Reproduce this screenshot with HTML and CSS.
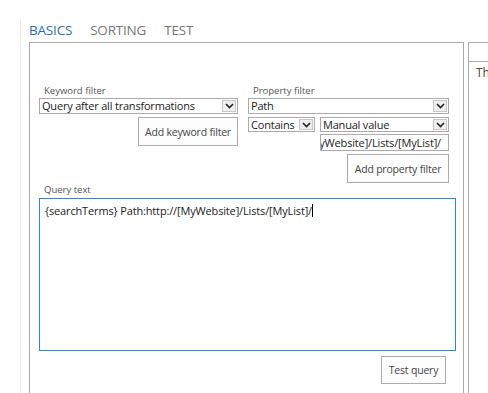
FILE: index.html
```html
<!DOCTYPE html>
<html lang="en">
<head>
    <meta charset="UTF-8">
    <title>Query builder</title>
    <link rel="stylesheet" href="styles.css">
</head>
<body>
    <div class="shell">
        <div class="tabs">
            <span class="tab active">BASICS</span>
            <span class="tab">SORTING</span>
            <span class="tab">TEST</span>
        </div>
        <div class="main">
            <div class="panel">
                <div class="filters">
                    <div class="filter-col">
                        <label class="field-label">Keyword filter</label>
                        <div class="select">
                            <span class="select-text">Query after all transformations</span>
                            <span class="arrow"><svg width="9" height="6" viewBox="0 0 9 6"><path d="M1 1 L4.5 4.5 L8 1" fill="none" stroke="#222" stroke-width="1.6"/></svg></span>
                        </div>
                        <div class="btn-row">
                            <button class="btn btn-keyword">Add keyword filter</button>
                        </div>
                    </div>
                    <div class="filter-col">
                        <label class="field-label">Property filter</label>
                        <div class="select">
                            <span class="select-text">Path</span>
                            <span class="arrow"><svg width="9" height="6" viewBox="0 0 9 6"><path d="M1 1 L4.5 4.5 L8 1" fill="none" stroke="#222" stroke-width="1.6"/></svg></span>
                        </div>
                        <div class="op-row">
                            <div class="select select-op">
                                <span class="select-text">Contains</span>
                                <span class="arrow"><svg width="9" height="6" viewBox="0 0 9 6"><path d="M1 1 L4.5 4.5 L8 1" fill="none" stroke="#222" stroke-width="1.6"/></svg></span>
                            </div>
                            <div class="select select-value">
                                <span class="select-text">Manual value</span>
                                <span class="arrow"><svg width="9" height="6" viewBox="0 0 9 6"><path d="M1 1 L4.5 4.5 L8 1" fill="none" stroke="#222" stroke-width="1.6"/></svg></span>
                            </div>
                        </div>
                        <div class="value-input"><span>http://[MyWebsite]/Lists/[MyList]/</span></div>
                        <div class="btn-row">
                            <button class="btn btn-property">Add property filter</button>
                        </div>
                    </div>
                </div>
                <label class="field-label query-label">Query text</label>
                <div class="query-box">{searchTerms} Path:http://[MyWebsite]/Lists/[MyList]/<span class="caret"></span></div>
                <div class="btn-row">
                    <button class="btn btn-test">Test query</button>
                </div>
            </div>
            <div class="side">
                <div class="side-head"></div>
                <div class="side-body">Th</div>
            </div>
        </div>
    </div>
</body>
</html>
```

FILE: styles.css
```css
body {
    margin: 0;
    padding: 0;
    background-color: #fff;
    font-family: "Open Sans", "Noto Sans", sans-serif;
    color: #333;
    overflow: hidden;
}
.shell {
    margin: 20px 0 0 20px;
    padding-left: 8px;
    border-left: 1px solid #e8e8e8;
    height: 400px;
}
.tabs {
    display: flex;
    gap: 18px;
    height: 22px;
}
.tab {
    font-size: 13.5px;
    line-height: 20px;
    letter-spacing: -0.2px;
    color: #777;
}
.tab.active {
    color: #2a6ebb;
}
.main {
    display: flex;
    gap: 4px;
}
.panel {
    width: 415px;
    flex: none;
    border: 1px solid #ababab;
    padding: 42px 9px 20px 9px;
    height: 400px;
}
.filters {
    display: grid;
    grid-template-columns: 199px 201px;
    gap: 10px;
}
.filter-col {
    display: flex;
    flex-direction: column;
}
.field-label {
    display: block;
    font-size: 9.5px;
    line-height: 12px;
    color: #555;
    padding-left: 5px;
    margin-bottom: 1px;
}
.select {
    display: flex;
    align-items: center;
    height: 14px;
    border: 1px solid #ababab;
    background-color: #fff;
}
.select-text {
    flex: 1;
    font-size: 11px;
    line-height: 14px;
    letter-spacing: -0.2px;
    color: #222;
    padding-left: 2px;
    white-space: nowrap;
    overflow: hidden;
}
.arrow {
    width: 14px;
    height: 12px;
    margin-right: 1px;
    border: 1px solid #c8c8c8;
    background-color: #eee;
    box-sizing: border-box;
    display: flex;
    align-items: center;
    justify-content: center;
}
.op-row {
    display: flex;
    gap: 5px;
    margin-top: 3px;
}
.select-op {
    width: 65px;
}
.op-row .select {
    height: 13px;
}
.op-row .arrow {
    height: 11px;
}
.select-value {
    flex: 1;
}
.value-input {
    margin-top: 2px;
    margin-left: 72px;
    height: 15px;
    border: 1px solid #ababab;
    display: flex;
    justify-content: flex-end;
    overflow: hidden;
    padding-right: 7px;
}
.value-input span {
    font-size: 11px;
    line-height: 15px;
    letter-spacing: -0.15px;
    white-space: nowrap;
    color: #222;
    flex: none;
}
.btn-row {
    display: flex;
    justify-content: flex-end;
}
.btn {
    font-family: "Open Sans", "Noto Sans", sans-serif;
    font-size: 10.5px;
    letter-spacing: -0.2px;
    white-space: nowrap;
    color: #444;
    background-color: #fdfdfd;
    border: 1px solid #ababab;
    height: 29px;
    padding: 0;
    margin-top: 3px;
}
.btn-keyword {
    width: 100px;
}
.btn-property {
    width: 102px;
}
.query-label {
    margin-top: 1px;
    margin-bottom: 2px;
}
.query-box {
    width: 405px;
    height: 141px;
    border: 1px solid #2b88d8;
    padding: 5px 5px;
    font-size: 11px;
    line-height: 14px;
    letter-spacing: -0.15px;
    color: #222;
    white-space: nowrap;
}
.caret {
    display: inline-block;
    width: 1px;
    height: 13px;
    background-color: #000;
    vertical-align: -2px;
}
.btn-test {
    width: 65px;
    height: 28px;
    margin-top: 5px;
    margin-right: 8px;
}
.side {
    width: 60px;
    flex: none;
    border-top: 1px solid #ababab;
    border-left: 1px solid #ababab;
    height: 400px;
    overflow: hidden;
}
.side-head {
    height: 18px;
    border-bottom: 1px solid #ababab;
}
.side-body {
    font-size: 12px;
    line-height: 16px;
    color: #444;
    padding: 3px 0 0 7px;
    white-space: nowrap;
}
```
